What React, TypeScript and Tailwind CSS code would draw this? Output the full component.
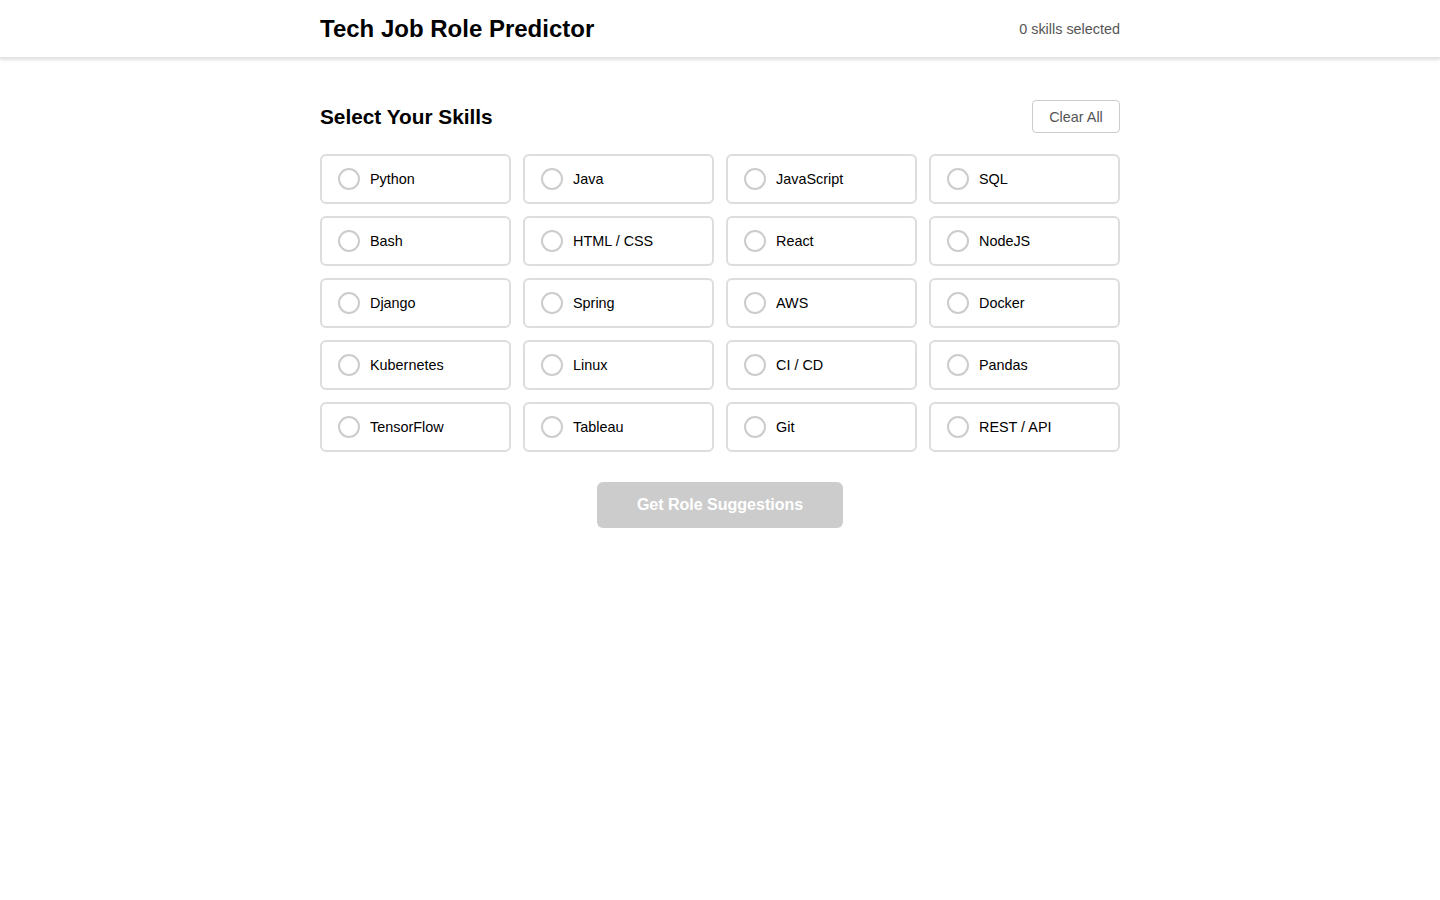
import { useState } from "react"

const skills = [
  "Python",
  "Java",
  "JavaScript",
  "SQL",
  "Bash",
  "HTML / CSS",
  "React",
  "NodeJS",
  "Django",
  "Spring",
  "AWS",
  "Docker",
  "Kubernetes",
  "Linux",
  "CI / CD",
  "Pandas",
  "TensorFlow",
  "Tableau",
  "Git",
  "REST / API",
]

export default function App() {
  const [selected, setSelected] = useState<string[]>([])

  const toggle = (skill: string) => {
    setSelected((prev) =>
      prev.includes(skill) ? prev.filter((s) => s !== skill) : [...prev, skill]
    )
  }

  return (
    <div className="min-h-screen bg-white text-black font-['Liberation_Sans',Arial,sans-serif]">
      <header className="h-[58px] bg-white shadow-[0_2px_3px_rgba(0,0,0,0.12)] border-b border-[#e2e2e2]">
        <div className="w-[800px] mx-auto h-full flex items-center justify-between">
          <h1 className="text-[24px] font-bold leading-none">Tech Job Role Predictor</h1>
          <span className="text-[14.4px] text-[#555] pt-[2px]">
            {selected.length} skills selected
          </span>
        </div>
      </header>

      <main className="w-[800px] mx-auto pt-[42px]">
        <div className="flex items-center justify-between mb-[21px]">
          <h2 className="text-[20.8px] font-bold">Select Your Skills</h2>
          <button
            onClick={() => setSelected([])}
            className="h-[33px] w-[88px] pt-[2px] border border-[#ccc] rounded-[4px] text-[14.4px] text-[#555] bg-white"
          >
            Clear All
          </button>
        </div>

        <div className="grid grid-cols-4 gap-[12px]">
          {skills.map((skill) => {
            const on = selected.includes(skill)
            return (
              <button
                key={skill}
                onClick={() => toggle(skill)}
                className={`h-[50px] flex items-center pl-[16px] border-2 rounded-[6px] text-left text-[14.4px] ${
                  on ? "border-[#2563eb] bg-[#eff6ff]" : "border-[#ddd] bg-white"
                }`}
              >
                <span
                  className={`w-[22px] h-[22px] rounded-full border-2 mr-[10px] ${
                    on ? "border-[#2563eb] bg-[#2563eb]" : "border-[#ccc]"
                  }`}
                ></span>
                <span className="pt-[2px]">{skill}</span>
              </button>
            )
          })}
        </div>

        <div className="flex justify-center mt-[30px]">
          <button
            disabled={selected.length === 0}
            className={`w-[246px] h-[46px] rounded-[6px] text-white text-[16px] font-bold ${
              selected.length === 0 ? "bg-[#ccc]" : "bg-[#2563eb]"
            }`}
          >
            Get Role Suggestions
          </button>
        </div>
      </main>
    </div>
  )
}
